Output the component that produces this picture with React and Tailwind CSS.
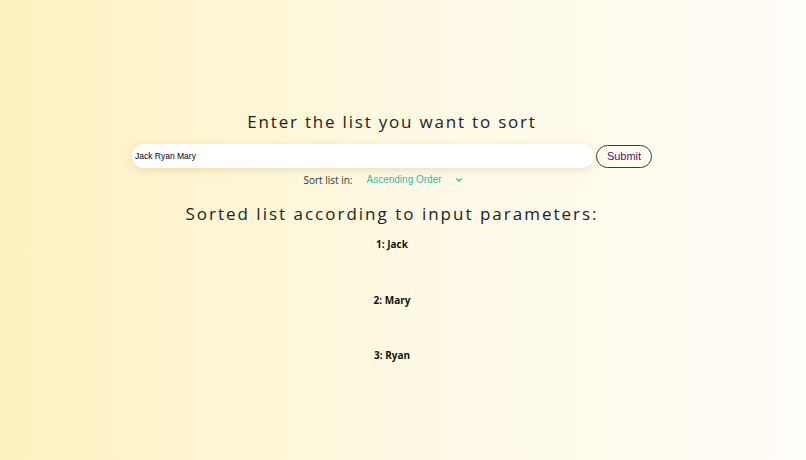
import React, { useState } from 'react';

const App = () => {
  const [text, setText] = useState('Jack Ryan Mary');
  const [order, setOrder] = useState('asc');
  const [items, setItems] = useState(['Jack', 'Mary', 'Ryan']);

  const handleSubmit = (e) => {
    e.preventDefault();
    const list = text.split(' ').filter(Boolean).sort();
    setItems(order === 'asc' ? list : list.reverse());
  };

  return (
    <div className="min-h-[460px] w-full bg-gradient-to-r from-[#fdf1bf] via-[#fef9e3] to-[#fffdf8] font-['Open_Sans',sans-serif]">
      <div className="w-[784px] flex flex-col items-center pt-[109px]">
        <h1 className="text-[17px] leading-[26px] tracking-[1.8px] text-[#222]">Enter the list you want to sort</h1>
        <form onSubmit={handleSubmit} className="mt-[9px] flex items-center gap-[2px]">
          <input
            value={text}
            onChange={(e) => setText(e.target.value)}
            className="w-[462px] h-[24px] rounded-full bg-white shadow-[0_2px_8px_rgba(190,170,110,0.3)] px-[3px] text-[8.5px] font-['Liberation_Sans',sans-serif] text-black outline-none"
          />
          <button
            type="submit"
            className="w-[56px] h-[23px] rounded-full border-[1.5px] border-[#3a3a3a] text-[11px] font-['Liberation_Sans',sans-serif] text-[#43206e]"
          >
            Submit
          </button>
        </form>
        <div className="mt-[4px] pr-[18px] flex items-center text-[10px] leading-[16px]">
          <span className="text-[#333] mr-[14px]">Sort list in:</span>
          <div className="relative w-[96px] flex items-center">
            <select
              value={order}
              onChange={(e) => setOrder(e.target.value)}
              className="appearance-none bg-transparent text-[#2cbfae] font-['Liberation_Sans',sans-serif] text-[10px] outline-none w-full"
            >
              <option value="asc">Ascending Order</option>
              <option value="desc">Descending Order</option>
            </select>
            <svg width="8" height="6" viewBox="0 0 8 6" className="absolute right-0 pointer-events-none">
              <path d="M1.5 1.5 L4 4 L6.5 1.5" stroke="#2cbfae" strokeWidth="1.5" fill="none" />
            </svg>
          </div>
        </div>
        <h2 className="mt-[13px] text-[17px] leading-[26px] tracking-[2px] text-[#222]">Sorted list according to input parameters:</h2>
        <ul className="mt-[9px] flex flex-col items-center gap-[39.5px]">
          {items.map((item, i) => (
            <li key={i} className="text-[10px] leading-[16px] font-bold text-[#111]">
              {i + 1}: {item}
            </li>
          ))}
        </ul>
      </div>
    </div>
  );
};

export default App;
